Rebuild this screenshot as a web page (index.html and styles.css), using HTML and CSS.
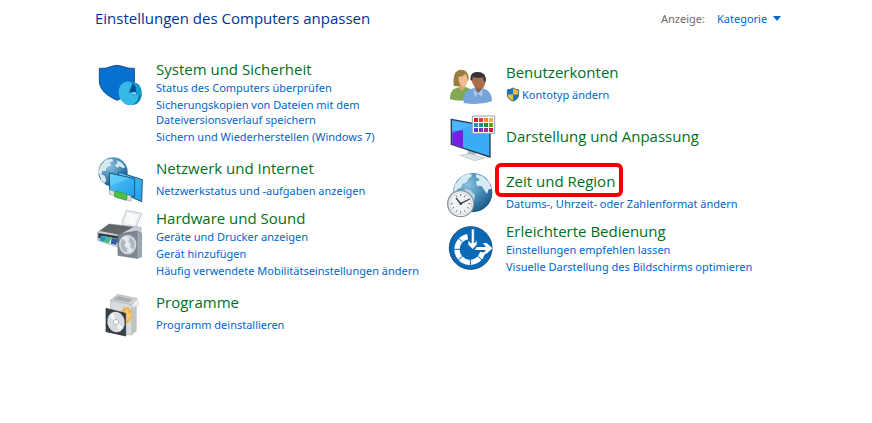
FILE: index.html
```html
<!DOCTYPE html>
<html lang="de">
<head>
    <meta charset="UTF-8">
    <meta name="viewport" content="width=device-width, initial-scale=1.0">
    <title>Einstellungen des Computers anpassen</title>
    <link rel="stylesheet" href="styles.css">
</head>
<body>
    <!-- Kopfzeile -->
    <header class="header">
        <h1>Einstellungen des Computers anpassen</h1>
        <div class="view">
            <label for="view">Anzeige:</label>
            <span class="view-select">
                <select id="view">
                    <option>Kategorie</option>
                </select>
                <svg width="8" height="5" viewBox="0 0 8 5" aria-hidden="true"><path d="M0 0h8L4 5z" fill="#0066cc"/></svg>
            </span>
        </div>
    </header>

    <main class="categories">
        <!-- Linke Spalte -->
        <div class="column">
            <section class="category tall">
                <svg class="icon" viewBox="15 15 138 138" aria-hidden="true">
                    <path d="M28 40Q49 42 65 34Q80 28 97 34Q113 42 133 40V82C132 108 111 123 81 136C49 121 28 104 28 77z" fill="#0870cf" stroke="#164f82" stroke-width="3"/>
                    <ellipse cx="124" cy="115" rx="31" ry="35" fill="#087eaa" transform="rotate(-12 124 115)"/>
                    <ellipse cx="116" cy="115" rx="30" ry="36" fill="#36b9e5" transform="rotate(-14 116 115)"/>
                    <path d="M125 82C146 81 158 98 154 119L130 121z" fill="#159bcd"/>
                    <path d="M128 84L117 113L139 120L137 95z" fill="#084f9c"/>
                    <path d="M117 113l22 7-2-9z" fill="#7cdcf6"/>
                </svg>
                <div class="text">
                    <h2><a href="#">System und Sicherheit</a></h2>
                    <ul>
                        <li><a href="#">Status des Computers überprüfen</a></li>
                        <li><a href="#">Sicherungskopien von Dateien mit dem Dateiversionsverlauf speichern</a></li>
                        <li><a href="#">Sichern und Wiederherstellen (Windows 7)</a></li>
                    </ul>
                </div>
            </section>

            <section class="category">
                <svg class="icon" viewBox="15 27 138 138" aria-hidden="true">
                    <defs>
                        <radialGradient id="globe" cx=".38" cy=".3" r=".75">
                            <stop offset="0" stop-color="#8cc3df"/>
                            <stop offset=".55" stop-color="#4288b4"/>
                            <stop offset="1" stop-color="#175784"/>
                        </radialGradient>
                        <linearGradient id="screen" x2="1" y2="1">
                            <stop offset="0" stop-color="#56c9fa"/>
                            <stop offset="1" stop-color="#209de8"/>
                        </linearGradient>
                    </defs>
                    <circle cx="69" cy="66" r="44" fill="url(#globe)"/>
                    <path d="M31 49l16-20 19-3 4 8-11 3 4 9-12 5-4 12-9-1-4 10 10 5 5 13-6 11-10-11-4-16-5-7z" fill="#d6e9f1"/>
                    <path d="M80 31l16 7 10 14-7 3-10-6-8 4-7-8 8-4z" fill="#d6e9f1"/>
                    <path d="M86 66l71 23-2 66-69-30z" fill="url(#screen)" stroke="#20577c" stroke-width="3"/>
                    <path d="M58 69l76 17v55l-75-20z" fill="url(#screen)" stroke="#20577c" stroke-width="3"/>
                    <path d="M60 72l60 13-60 23z" fill="#78d8ff" opacity=".45"/>
                    <path d="M58 120l65 18v16l-65-21z" fill="#dce1df" stroke="#a3ada8" stroke-width="2"/>
                    <path d="M76 123l33 9q5 8 0 19l-34-10q-5-8 1-18z" fill="#4bc247" stroke="#2f9338" stroke-width="2"/>
                </svg>
                <div class="text">
                    <h2><a href="#">Netzwerk und Internet</a></h2>
                    <ul>
                        <li><a href="#">Netzwerkstatus und -aufgaben anzeigen</a></li>
                    </ul>
                </div>
            </section>

            <section class="category tall">
                <svg class="icon" viewBox="15 12 138 138" aria-hidden="true">
                    <path d="M96 50L109 16l46 9-19 46-38-4z" fill="#e9edf2" stroke="#aeb4bd" stroke-width="2"/>
                    <path d="M104 52l9-28 32 7-12 30z" fill="#f8fafb"/>
                    <path d="M23 81L57 57l96 10v31l-70 28-60-20z" fill="#cdd0d5" stroke="#a0a5ac" stroke-width="2"/>
                    <path d="M29 78L57 57l73 9-42 23z" fill="#62666b"/>
                    <path d="M25 84l61 10v19l-61-14z" fill="#333b44"/>
                    <path d="M34 92l48 9-3 21-51-16z" fill="#edf6f5"/>
                    <path d="M34 93l16 3-9 15-13-5z" fill="#1795d1"/>
                    <path d="M50 96l15 3-9 16-15-4z" fill="#41b77d"/>
                    <path d="M65 99l17 3-3 18-17-4z" fill="#345fae"/>
                    <path d="M84 88l58-10 12 8v69l-12 5-58-9z" fill="#7e8892" stroke="#626d78" stroke-width="2"/>
                    <path d="M142 79l12 7v69l-12 5z" fill="#9ba7b1"/>
                    <ellipse cx="113" cy="119" rx="26" ry="29" fill="#d6dbdf"/>
                    <ellipse cx="113" cy="119" rx="21" ry="24" fill="#aeb7bf"/>
                    <path d="M113 119L98 99q11-7 21-1zM113 119l17 16q-8 9-19 7z" fill="#e4e8ea"/>
                    <circle cx="113" cy="119" r="9" fill="#e7eaed"/>
                </svg>
                <div class="text">
                    <h2><a href="#">Hardware und Sound</a></h2>
                    <ul>
                        <li><a href="#">Geräte und Drucker anzeigen</a></li>
                        <li><a href="#">Gerät hinzufügen</a></li>
                        <li><a href="#">Häufig verwendete Mobilitätseinstellungen ändern</a></li>
                    </ul>
                </div>
            </section>

            <section class="category">
                <svg class="icon" viewBox="15 24 138 138" aria-hidden="true">
                    <path d="M62 45l63 4v101l-63-8z" fill="#d8dadd" stroke="#b3b5b8" stroke-width="2"/>
                    <path d="M125 49l15 10v80l-15 11z" fill="#bdc5c1"/>
                    <path d="M62 46l21-18 59 13-17 18z" fill="#d0d1d4" stroke="#acadb0" stroke-width="2"/>
                    <path d="M70 43l16-10 42 10-12 9z" fill="#aaaeb2"/>
                    <path d="M125 59l17-18 5 17-18 12z" fill="#ececee" stroke="#bdbec0"/>
                    <ellipse cx="109" cy="90" rx="16" ry="24" fill="#f1b448"/>
                    <path d="M110 70l7 17 10-1-9 13-9 12-6-17-10-4 10-6z" fill="#f8ca75"/>
                    <path d="M48 70l59 15v68l-59-13z" fill="#34404a" stroke="#252d34" stroke-width="2"/>
                    <ellipse cx="78" cy="111" rx="26" ry="31" fill="#d8dcdf" transform="rotate(-10 78 111)"/>
                    <path d="M78 111L58 94l12-12zM78 111l20 15-10 13z" fill="#f3f4f5"/>
                    <circle cx="78" cy="111" r="8" fill="#f8f9f9" stroke="#9fa6aa" stroke-width="2"/>
                </svg>
                <div class="text">
                    <h2><a href="#">Programme</a></h2>
                    <ul>
                        <li><a href="#">Programm deinstallieren</a></li>
                    </ul>
                </div>
            </section>
        </div>

        <!-- Rechte Spalte -->
        <div class="column right">
            <section class="category">
                <svg class="icon" viewBox="15 9 138 138" aria-hidden="true">
                    <path d="M30 118q-1-29 20-35l21-3q24 3 24 19v19q-32 8-65 0z" fill="#81a953"/>
                    <path d="M56 82l10 12 11-14-4-12H58z" fill="#dba674"/>
                    <path d="M41 77Q37 31 62 29q24 0 24 27L75 77q-17 4-34 0z" fill="#9c7d3d"/>
                    <path d="M55 50q14 0 22-9 8 14 4 27-4 12-13 13-11-3-13-31z" fill="#edbd91"/>
                    <path d="M71 129q-4-35 20-42l24-5 18 4q23 7 23 38-41 13-85 5z" fill="#76a4d8"/>
                    <path d="M102 78l13 21 15-16-3-17h-23z" fill="#8d5e3d"/>
                    <path d="M93 54q0-17 20-18 24 0 24 23-1 27-19 28-19-2-25-33z" fill="#a87048"/>
                    <path d="M91 59q-2-23 22-23 28 0 24 30l-5-2-3-12q-17 4-30-2l-3 12z" fill="#33353b"/>
                    <path d="M99 87l15 14-9 11zM129 84l-15 17 12 9z" fill="#a9c8ee"/>
                </svg>
                <div class="text">
                    <h2><a href="#">Benutzerkonten</a></h2>
                    <ul>
                        <li>
                            <a class="shielded" href="#">
                                <svg width="14" height="16" viewBox="0 0 14 16" aria-hidden="true">
                                    <path d="M7 1Q4 3 1 3v5q0 5 6 7z" fill="#1976bd"/>
                                    <path d="M7 1q3 2 6 2v5q0 5-6 7z" fill="#f5bd34"/>
                                    <path d="M1 8h6v7Q1 13 1 8z" fill="#f5bd34"/>
                                    <path d="M7 8h6q0 5-6 7z" fill="#1976bd"/>
                                    <path d="M7 1Q4 3 1 3v5q0 5 6 7 6-2 6-7V3Q10 3 7 1z" fill="none" stroke="#35638a"/>
                                </svg>
                                Kontotyp ändern
                            </a>
                        </li>
                    </ul>
                </div>
            </section>

            <section class="category single">
                <svg class="icon" viewBox="15 15 138 138" aria-hidden="true">
                    <path d="M83 125l24 5v15H83z" fill="#aab7c0"/>
                    <path d="M59 142l30-5 46 13-30 8z" fill="#dce3e7" stroke="#b5c0c7" stroke-width="2"/>
                    <path d="M34 34l116 22v91L34 109z" fill="#3aabf7" stroke="#263e53" stroke-width="4"/>
                    <path d="M37 69l32-2v52l-32-11z" fill="#7620e2"/>
                    <path d="M37 38l60 12L37 76z" fill="#5fc0ff" opacity=".5"/>
                    <path d="M97 24h67v52H97z" fill="#fff" stroke="#9ca2a8" stroke-width="3"/>
                    <g stroke-width="12">
                        <path d="M102 36h12" stroke="#d11c32"/><path d="M117 36h12" stroke="#ef3e32"/>
                        <path d="M132 36h12" stroke="#f58b25"/><path d="M147 36h12" stroke="#f2b528"/>
                        <path d="M102 51h12" stroke="#288aba"/><path d="M117 51h12" stroke="#168a9e"/>
                        <path d="M132 51h12" stroke="#238c39"/><path d="M147 51h12" stroke="#59a728"/>
                        <path d="M102 66h12" stroke="#523dba"/><path d="M117 66h12" stroke="#783bad"/>
                        <path d="M132 66h12" stroke="#b52184"/><path d="M147 66h12" stroke="#cf184c"/>
                    </g>
                </svg>
                <div class="text">
                    <h2><a href="#">Darstellung und Anpassung</a></h2>
                </div>
            </section>

            <section class="category">
                <svg class="icon" viewBox="15 21 138 138" aria-hidden="true">
                    <circle cx="98" cy="83" r="59" fill="url(#globe)"/>
                    <path d="M45 59L66 34l22-9 9 7-12 9-5 11-13 4-4 12-10 3-6 12-6-3z" fill="#d7ebf4"/>
                    <path d="M108 27l20 7 19 17 8 21-9 1-5 14-8-11-8-13-14-1-3-12 12-6-12-8z" fill="#d7ebf4"/>
                    <path d="M75 72l15 4 15 14-3 18-8 22-9-7-4-20-9-9z" fill="#b7d8e8"/>
                    <circle cx="62" cy="116" r="39" fill="#f0f2f4" stroke="#8c959e" stroke-width="4"/>
                    <circle cx="62" cy="116" r="33" fill="none" stroke="#c0c6cb" stroke-width="2"/>
                    <path d="M62 87v6M62 139v6M33 116h6M85 116h6M48 91l3 5M76 91l-3 5M37 130l5-3M87 130l-5-3M48 141l3-5M76 141l-3-5" stroke="#68747e" stroke-width="3"/>
                    <path d="M48 99l14 17 27-14" fill="none" stroke="#353f48" stroke-width="4"/>
                    <circle cx="62" cy="116" r="4" fill="#353f48"/>
                </svg>
                <div class="text">
                    <h2><a class="marked" href="#">Zeit und Region</a></h2>
                    <ul>
                        <li><a href="#">Datums-, Uhrzeit- oder Zahlenformat ändern</a></li>
                    </ul>
                </div>
            </section>

            <section class="category">
                <svg class="icon" viewBox="15 12 138 138" aria-hidden="true">
                    <circle cx="92" cy="90" r="64" fill="#0869b7" stroke="#164e82" stroke-width="3"/>
                    <path d="M83 56A39 39 0 1 0 128 103" fill="none" stroke="#fff" stroke-width="16"/>
                    <path d="M68 72L53 59M62 94H40M68 113l-14 15M91 120v22M112 113l15 14" stroke="#0869b7" stroke-width="3"/>
                    <path d="M94 33h9v42l8-8v13L98 94 84 80V67l10 8z" fill="#fff" stroke="#0869b7" stroke-width="2"/>
                    <path d="M110 87h28l-10-12h12l17 16-17 16h-12l10-11h-34z" fill="#fff"/>
                </svg>
                <div class="text">
                    <h2><a href="#">Erleichterte Bedienung</a></h2>
                    <ul>
                        <li><a href="#">Einstellungen empfehlen lassen</a></li>
                        <li><a href="#">Visuelle Darstellung des Bildschirms optimieren</a></li>
                    </ul>
                </div>
            </section>
        </div>
    </main>
</body>
</html>
```
FILE: styles.css
```css
/* Grundstile */
* {
    box-sizing: border-box;
}

body {
    margin: 0;
    padding: 7px 77px 24px 95px;
    background: #fff;
    font-family: "Segoe UI", "Noto Sans", sans-serif;
    font-size: 11px;
    line-height: 15px;
}

h1, h2, ul {
    margin: 0;
    padding: 0;
    font-weight: 400;
}

h1, h2 {
    font-family: "Segoe UI", "Open Sans", sans-serif;
}

ul {
    list-style: none;
}

a {
    color: #0066cc;
    text-decoration: none;
}

a:hover {
    text-decoration: underline;
}

/* Kopfzeile */
.header {
    display: flex;
    justify-content: space-between;
    align-items: center;
    padding-right: 14px;
}

h1 {
    color: #003399;
    font-size: 15px;
    line-height: 22px;
}

.view {
    display: flex;
    align-items: center;
    gap: 12px;
    color: #6d6d6d;
}

.view-select {
    display: flex;
    align-items: center;
    gap: 5px;
}

select {
    appearance: none;
    padding: 0;
    border: 0;
    background: none;
    color: #0066cc;
    font: inherit;
}

/* Kategorien */
.categories {
    display: grid;
    grid-template-columns: 1fr 1fr;
    padding-top: 31px;
}

.column {
    display: flex;
    flex-direction: column;
    gap: 4px;
}

.right {
    padding-top: 3px;
}

.category {
    display: grid;
    grid-template-columns: 46px 1fr;
    column-gap: 15px;
    align-items: start;
    min-height: 46px;
}

.icon {
    width: 46px;
    height: 46px;
    overflow: visible;
}

h2 {
    font-size: 15px;
    line-height: 18px;
}

h2 a {
    color: #00701c;
}

.text {
    display: flex;
    flex-direction: column;
    gap: 6px;
}

ul {
    display: flex;
    flex-direction: column;
    gap: 2px;
}

.tall {
    padding-bottom: 11px;
}

.text:has(li + li) {
    gap: 2px;
}

.tall li {
    max-width: 280px;
}

.single {
    align-items: center;
    margin-bottom: 9px;
}

.shielded {
    display: flex;
    align-items: center;
    gap: 2px;
}

.shielded svg {
    height: 15px;
}

/* Rote Markierung */
.marked {
    position: relative;
}

.marked::before {
    content: "";
    position: absolute;
    inset: -8px -8px -6px -11px;
    border: 4px solid #f40000;
    border-radius: 6px;
}
```
